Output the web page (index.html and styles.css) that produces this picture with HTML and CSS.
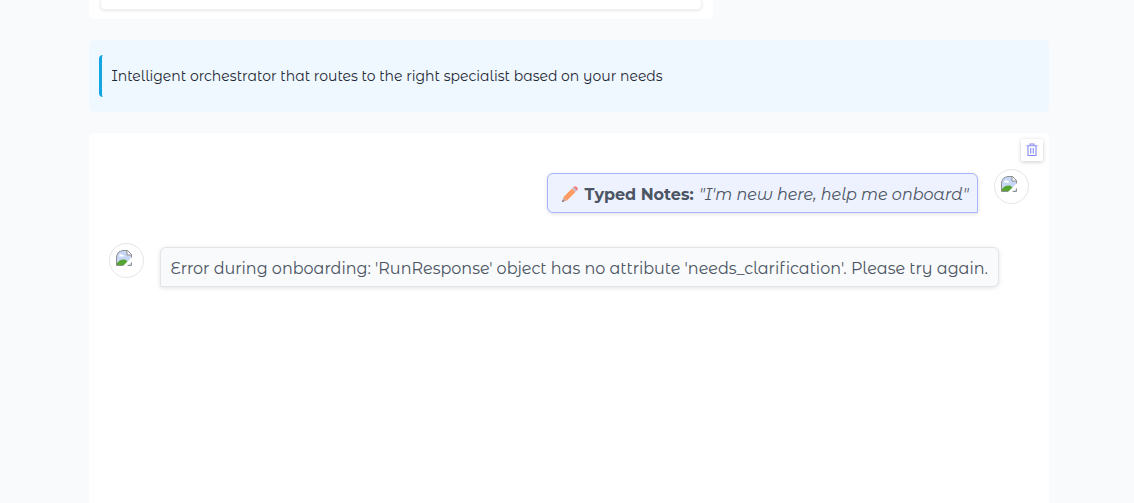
FILE: index.html
```html
<!DOCTYPE html>
<html lang="en">
<head>
<meta charset="utf-8">
<title>Assistant</title>
<link rel="stylesheet" href="styles.css">
</head>
<body>
<svg class="defs" aria-hidden="true">
  <symbol id="broken" viewBox="0 0 16 16">
    <path d="M.5 3Q.5.5 3 .5H11.500L15.500 4.500V15.500H.5Z" fill="#c6d6f5"/>
    <path d="M3 6.500a2 2 0 0 1 3.500-1.500a1.500 1.500 0 0 1 2 1.500Z" fill="#fff"/>
    <path d="M1 15V13C3 10.500 5 9.500 7.500 9.500S12 11 13 15Z" fill="#55a532"/>
    <path d="M11 .5V5H15.500Z" fill="#fff"/>
    <path d="M.5 15.500V7Q1 1 7 .5H11.500L15.500 4.500V15.500ZM11 .5V5H15.500" fill="none" stroke="#8f8f8f"/>
    <path d="M0 0H6Q1 1 0 6Z" fill="#fff"/>
    <path d="M16 7L7 16H11L16 12Z" fill="#fff"/>
  </symbol>
</svg>
<main class="page">
  <section class="panel"><div class="field"></div></section>
  <section class="intro"><p class="quote">Intelligent orchestrator that routes to the right specialist based on your needs</p></section>
  <section class="chat">
    <button class="clear" aria-label="Clear">
      <svg viewBox="0 0 12 14"><path d="M4 2V1H8V2M.5 2.700H11.500M2 3V12.500H10V3M4.700 5V10.500M7.300 5V10.500" fill="none" stroke="#8589f5" stroke-width="1.100"/></svg>
    </button>
    <div class="row user">
      <div class="bubble">
        <svg class="pencil" viewBox="0 0 18 18">
          <path d="M1 17L2.500 12L6 15.500Z" fill="#d6a795"/><path d="M1 17L1.700 14.700L3.300 16.300Z" fill="#6c626a"/>
          <path d="M2.500 12L11 3.500L14.500 7L6 15.500Z" fill="#ff9b62"/>
          <path d="M11 3.500L12.500 2L16 5.500L14.500 7Z" fill="#c5bccb"/>
          <path d="M12.500 2Q14 .3 15.800 2.100Q17.700 4 16 5.500Z" fill="#f87878"/>
        </svg><strong>Typed Notes:</strong><em>"I'm new here, help me onboard"</em>
      </div>
      <div class="avatar"><svg><use href="#broken"/></svg></div>
    </div>
    <div class="row bot">
      <div class="avatar"><svg><use href="#broken"/></svg></div>
      <div class="bubble"><span>Error during onboarding: 'RunResponse' object has no attribute 'needs_clarification'. Please try again.</span></div>
    </div>
  </section>
</main>
</body>
</html>
```
FILE: styles.css
```css
* { box-sizing: border-box; }
body { margin: 0; height: 503px; overflow: hidden; background: #f9fafb; font-family: "Montserrat Alternates", Montserrat, Lato, sans-serif; color: #374151; }
.defs { display: none; }
.page { width: 960px; margin-left: 89px; display: flex; flex-direction: column; }
.panel { width: 624px; height: 19px; padding: 0 11px; background: #fff; border-radius: 0 0 5px 5px; }
.field { height: 10px; background: #fff; border: 1px solid #f1f1f3; border-top: 0; border-radius: 0 0 5px 5px; box-shadow: 0 1px 3px rgba(0,0,0,.1); }
.intro { margin-top: 21px; height: 72px; padding: 15px 10px; background: #f0f8ff; border-radius: 5px; }
.quote { margin: 0; height: 42px; padding-left: 9.500px; border-left: 3px solid #12a5e4; border-radius: 4px; line-height: 42px; font-size: 14px; color: #1f2937; white-space: nowrap; }
.chat { position: relative; height: 392px; margin-top: 21px; padding: 36px 20px 0; background: #fff; border-radius: 5px; }
.clear { position: absolute; top: 6px; right: 6px; width: 22px; height: 22px; padding: 4px 5px; border: 0; border-radius: 2px; background: #fff; box-shadow: 0 1px 4px rgba(0,0,0,.2); }
.clear svg { display: block; width: 12px; height: 14px; }
.row { display: flex; align-items: flex-start; gap: 16px; height: 44px; }
.user { justify-content: flex-end; }
.bot { margin-top: 30px; }
.avatar { width: 35px; height: 35px; flex: none; padding: 6px; border: 1px solid #e5e5e8; border-radius: 50%; background: #fff; }
.avatar svg { display: block; width: 16px; height: 16px; }
.bubble { display: flex; align-items: center; height: 40px; margin-top: 4px; padding: 2px 10px 0; border: 1px solid; font-size: 16px; white-space: nowrap; color: #4b5563; box-shadow: 0 1px 4px rgba(0,0,0,.12); }
.user .bubble { width: 431px; background: #eef2ff; border-color: #a5b4fc; border-radius: 6px 6px 0 6px; }
.bot .bubble { width: 839px; padding-left: 9.500px; background: #f9fafb; border-color: #e2e5e9; border-radius: 6px 6px 6px 0; letter-spacing: -.012px; }
.pencil { flex: none; width: 18px; height: 18px; margin: 0 6px 0 2.500px; }
strong { flex: none; width: 114.500px; font-family: Montserrat, "Montserrat Alternates", sans-serif; }
em { letter-spacing: -.01px; }
```
